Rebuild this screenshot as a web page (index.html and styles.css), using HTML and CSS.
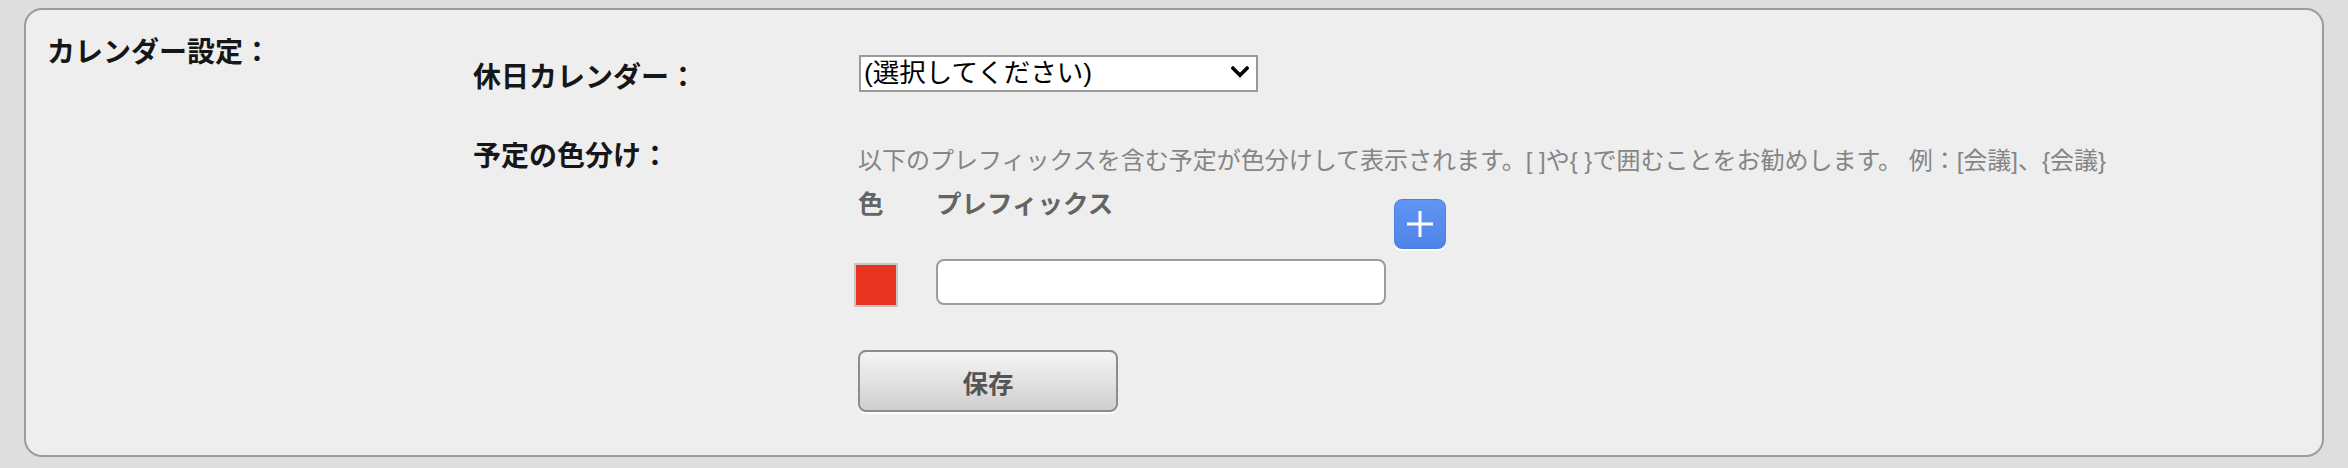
FILE: index.html
```html
<!DOCTYPE html>
<html lang="ja">
<head>
<meta charset="utf-8">
<title>カレンダー設定</title>
<link rel="stylesheet" href="styles.css">
</head>
<body>
<div class="panel">
  <div class="section-title">カレンダー設定：</div>
  <div class="section-body">
    <div class="row row-holiday">
      <div class="label">休日カレンダー：</div>
      <div class="value">
        <div class="select-wrap">
          <select class="select">
            <option>(選択してください)</option>
          </select>
          <svg class="chevron" width="18" height="12" viewBox="0 0 18 12" aria-hidden="true">
            <path d="M2 2.2 L9 9.2 L16 2.2" fill="none" stroke="#000" stroke-width="3.6" stroke-linecap="square" stroke-linejoin="miter"/>
          </svg>
        </div>
      </div>
    </div>
    <div class="row row-color">
      <div class="label">予定の色分け：</div>
      <div class="value">
        <p class="desc">以下のプレフィックスを含む予定が色分けして表示されます。[ ]や{ }で囲むことをお勧めします。 例：[会議]、{会議}</p>
        <div class="prefix-head">
          <div class="col-color">色</div>
          <div class="col-prefix">プレフィックス</div>
          <button class="add-btn" type="button" aria-label="追加">
            <svg width="26" height="26" viewBox="0 0 26 26" aria-hidden="true">
              <rect x="0" y="11.5" width="26" height="3" fill="#fff"/>
              <rect x="11.5" y="0" width="3" height="26" fill="#fff"/>
            </svg>
          </button>
        </div>
        <div class="prefix-row">
          <div class="col-color"><span class="swatch"></span></div>
          <div class="col-prefix"><input class="prefix-input" type="text"></div>
        </div>
        <button class="save-btn" type="button">保存</button>
      </div>
    </div>
  </div>
</div>
</body>
</html>
```

FILE: styles.css
```css
html, body {
  margin: 0;
  padding: 0;
}

body {
  background: #dedede;
  padding: 8px 24px 11px;
  font-family: "Liberation Sans", "Noto Sans CJK JP", sans-serif;
  color: #161616;
}

.panel {
  display: flex;
  align-items: flex-start;
  background: #eeeeee;
  border: 2px solid #9c9c9c;
  border-radius: 18px;
  padding: 19px 21px 43px;
  height: 449px;
  box-sizing: border-box;
}

.section-title {
  width: 426px;
  flex: none;
  margin-top: 5px;
  font-size: 28px;
  font-weight: bold;
  line-height: 38px;
}

.section-body {
  flex: 1;
  margin-top: 26px;
}

.row {
  display: flex;
  align-items: flex-start;
}

.label {
  width: 385px;
  flex: none;
  margin-top: 4px;
  font-size: 28px;
  font-weight: bold;
  line-height: 38px;
}

.row-color {
  margin-top: 37px;
}

.value {
  flex: 1;
}

.select-wrap {
  position: relative;
  width: 399px;
  height: 37px;
}

.select {
  appearance: none;
  -webkit-appearance: none;
  display: block;
  width: 100%;
  height: 100%;
  box-sizing: border-box;
  margin: 0 0 0 1px;
  border: 2px solid #9a9a9a;
  border-radius: 0;
  background: #ffffff;
  color: #000;
  font-family: "Liberation Sans", "Noto Sans CJK JP", sans-serif;
  font-size: 26.5px;
  padding: 0 0 0 3px;
  line-height: 33px;
}

.chevron {
  position: absolute;
  right: 8px;
  top: 11px;
  pointer-events: none;
}

.desc {
  margin: 10px 0 0;
  font-size: 24px;
  line-height: 34px;
  color: #858585;
  white-space: nowrap;
}

.prefix-head {
  display: flex;
  align-items: flex-start;
  margin-top: 8px;
  font-size: 25.5px;
  font-weight: bold;
  line-height: 36px;
  color: #646464;
}

.col-color {
  width: 78px;
  flex: none;
}

.col-prefix {
  width: 450px;
  flex: none;
}

.add-btn {
  margin: 13px 0 0 8px;
  width: 52px;
  height: 50px;
  padding: 0;
  display: flex;
  align-items: center;
  justify-content: center;
  border: 1px solid #4c7fe0;
  border-radius: 8px;
  background: linear-gradient(#6195f2, #4f83e8);
  box-shadow: 0 2px 0 #ffffff;
  cursor: pointer;
}

.prefix-row {
  display: flex;
  align-items: flex-start;
  margin-top: 10px;
}

.swatch {
  display: block;
  width: 44px;
  height: 44px;
  box-sizing: border-box;
  margin: 4px 0 0 -4px;
  background: #e93422;
  border: 2px solid #c6c6c6;
}

.prefix-input {
  display: block;
  width: 450px;
  height: 46px;
  box-sizing: border-box;
  margin: 0;
  border: 2px solid #9c9c9c;
  border-radius: 8px;
  background: #ffffff;
  font-size: 24px;
  padding: 0 10px;
}

.save-btn {
  display: block;
  margin-top: 43px;
  width: 260px;
  height: 62px;
  border: 2px solid #8c8c8c;
  border-radius: 8px;
  background: linear-gradient(#f5f5f5, #cfcfcf);
  box-shadow: 0 2px 0 #ffffff;
  font-family: "Liberation Sans", "Noto Sans CJK JP", sans-serif;
  font-size: 25.5px;
  font-weight: bold;
  color: #555555;
  cursor: pointer;
}
```
